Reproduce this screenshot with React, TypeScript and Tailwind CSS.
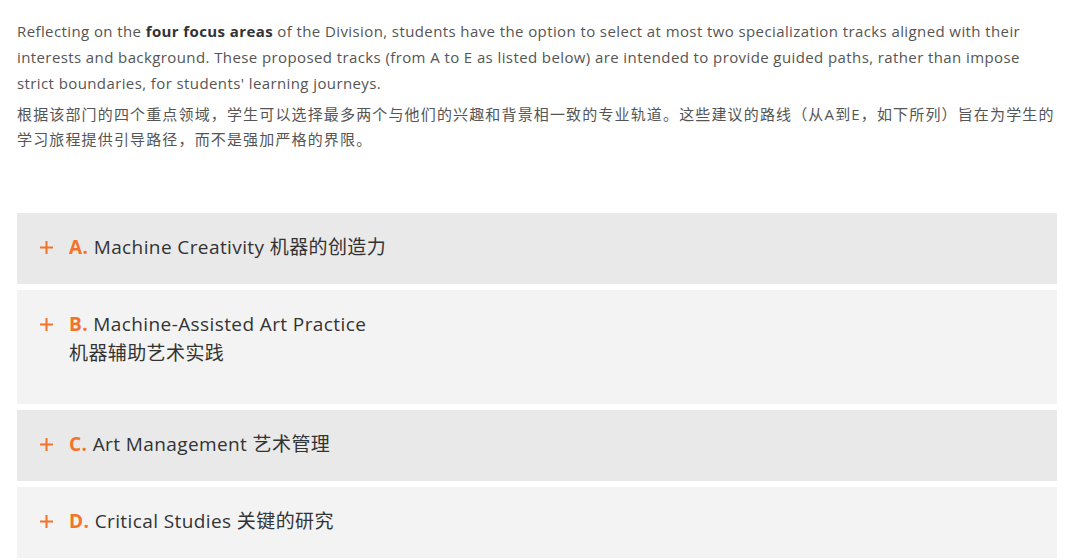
const FONT = "font-['Open_Sans','Noto_Sans_CJK_SC',sans-serif]";

type Track = {
  letter: string;
  title: React.ReactNode;
  tone: string;
  pad: string;
};

const TRACKS: Track[] = [
  { letter: "A.", title: "Machine Creativity 机器的创造力", tone: "bg-[#e9e9e9]", pad: "pt-[20px] pb-[22px]" },
  {
    letter: "B.",
    title: (
      <>
        Machine-Assisted Art Practice
        <br />
        机器辅助艺术实践
      </>
    ),
    tone: "bg-[#f3f3f3]",
    pad: "pt-[20px] pb-[36px]",
  },
  { letter: "C.", title: "Art Management 艺术管理", tone: "bg-[#e9e9e9]", pad: "pt-[20px] pb-[22px]" },
  { letter: "D.", title: "Critical Studies 关键的研究", tone: "bg-[#f3f3f3]", pad: "pt-[20px] pb-[22px]" },
];

function PlusIcon() {
  return (
    <svg width="15" height="15" viewBox="0 0 15 15" className="shrink-0">
      <path d="M7.5 1v13M1 7.5h13" stroke="#f2732a" strokeWidth="2" />
    </svg>
  );
}

export default function App() {
  return (
    <div className={`${FONT} min-h-[560px] w-[1080px] bg-white`}>
      <div className="w-[1058px] pl-[17px] pt-[18px]">
        <p className="text-[15px] leading-[26px] tracking-[0.4px] text-[#555]">
          Reflecting on the <b className="font-bold text-[#333]">four focus areas</b> of the Division, students have
          the option to select at most two specialization tracks aligned with their interests and background. These
          proposed tracks (from A to E as listed below) are intended to provide guided paths, rather than impose
          strict boundaries, for students' learning journeys.
        </p>
        <p className="mt-[6px] text-[15px] leading-[25px] tracking-[1.15px] text-[#555]">
          根据该部门的四个重点领域，学生可以选择最多两个与他们的兴趣和背景相一致的专业轨道。这些建议的路线（从A到E，如下所列）旨在为学生的学习旅程提供引导路径，而不是强加严格的界限。
        </p>
      </div>

      <div className="mt-[61px] flex w-[1057px] flex-col gap-[6px] pl-[17px]">
        {TRACKS.map((t) => (
          <div key={t.letter} className={`${t.tone} ${t.pad} pl-[22px]`}>
            <div className="flex items-start text-[19px] leading-[29px] tracking-[0.4px] text-[#333]">
              <span className="flex h-[29px] w-[30px] items-center">
                <PlusIcon />
              </span>
              <div>
                <span className="font-bold text-[#f2732a]">{t.letter}</span> {t.title}
              </div>
            </div>
          </div>
        ))}
      </div>
    </div>
  );
}
